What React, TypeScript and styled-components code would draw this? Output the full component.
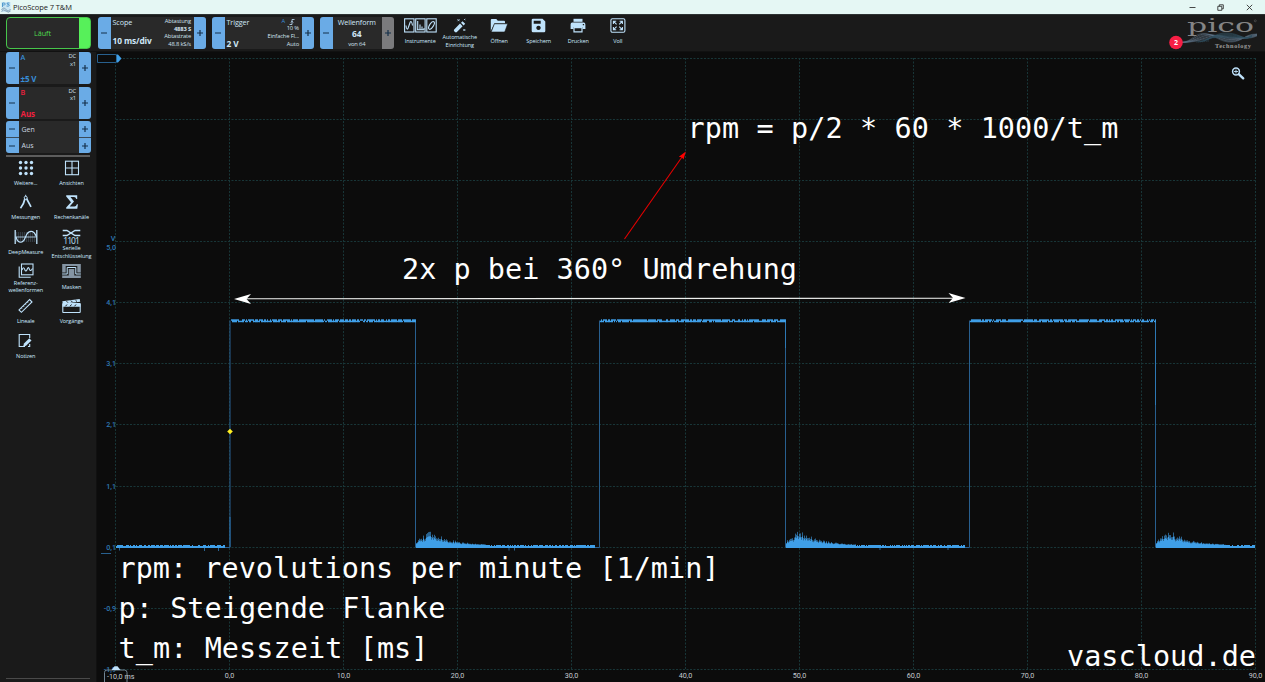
import React from 'react';
import styled, { createGlobalStyle } from 'styled-components';

const ICE = '#bfe2fb';
const WAVE = '#3f9fe8';

const GlobalStyle = createGlobalStyle`
  * { box-sizing: border-box; }
  body {
    margin: 0;
    background: #0c0c0c;
    font-family: "Open Sans", "Noto Sans", sans-serif;
    overflow: hidden;
  }
  svg { display: block; }
`;

const Window = styled.div`
  width: 1265px;
  height: 682px;
  display: flex;
  flex-direction: column;
  background: #0c0c0c;
  overflow: hidden;
`;

const TitleBar = styled.header`
  height: 14px;
  flex: none;
  display: flex;
  align-items: center;
  justify-content: space-between;
  padding: 0 12px 0 1px;
  background: #e5f7f4;
`;

const TitleText = styled.div`
  display: flex;
  align-items: center;
  gap: 2px;
  font-size: 7.5px;
  line-height: 14px;
  color: #222;
  letter-spacing: -0.08px;
`;

const WindowButtons = styled.div`
  display: flex;
  gap: 21px;
`;

const Toolbar = styled.div`
  height: 38px;
  flex: none;
  display: flex;
  background: #1a1a1a;
  border-top: 1px solid #2d3232;
  border-bottom: 1px solid #111;
  padding: 2px 0 0 6px;
`;

const Running = styled.div`
  width: 85px;
  height: 32px;
  margin-right: 7px;
  border: 1px solid #47c64b;
  border-radius: 4px;
  background: linear-gradient(90deg, #292929 72px, #57f05a 72px);
  padding-right: 12px;
  color: #4fdc4f;
  font-size: 7.2px;
  line-height: 31px;
  text-align: center;
`;

const Stepper = styled.div<{ $w: number; $mr?: number }>`
  display: flex;
  width: ${p => p.$w}px;
  height: 32px;
  margin-right: ${p => p.$mr ?? 0}px;
  border-radius: 3px;
  overflow: hidden;
  background: #292929;
`;

const StepButton = styled.div<{ $off?: boolean }>`
  width: 12.5px;
  flex: none;
  display: flex;
  align-items: center;
  justify-content: center;
  background: ${p => (p.$off ? '#7b7b7d' : '#6aabe6')};
`;

const StepBody = styled.div<{ $center?: boolean }>`
  flex: 1;
  min-width: 0;
  display: flex;
  justify-content: ${p => (p.$center ? 'center' : 'space-between')};
  padding: 1px 2.5px 1px 2px;
  white-space: nowrap;
`;

const Main = styled.div<{ $tone?: string; $center?: boolean }>`
  display: flex;
  flex-direction: column;
  justify-content: space-between;
  align-items: ${p => (p.$center ? 'center' : 'flex-start')};
  color: ${p => p.$tone ?? '#cfe6f7'};
`;

const Caption = styled.span<{ $bold?: boolean }>`
  font-size: 7.2px;
  line-height: 9.6px;
  letter-spacing: -0.1px;
  font-weight: ${p => (p.$bold ? 600 : 400)};
`;

const Value = styled.span<{ $size?: number; $lh?: number }>`
  font-size: ${p => p.$size ?? 8.4}px;
  line-height: ${p => p.$lh ?? 12}px;
  letter-spacing: -0.12px;
  font-weight: 700;
`;

const Details = styled.div<{ $lh?: number }>`
  text-align: right;
  color: #d2e2ef;
  font-size: 5.8px;
  font-weight: 500;
  line-height: ${p => p.$lh ?? 7.5}px;
  letter-spacing: -0.15px;
`;

const TriggerMark = styled.div`
  display: flex;
  justify-content: flex-end;
  align-items: center;
  gap: 4px;
  height: 7px;
  margin-right: 4px;
  color: #3a8fdc;
`;

const Tools = styled.div`
  display: flex;
  margin-left: 6.5px;
`;

const Tool = styled.div`
  width: 39.5px;
  display: flex;
  flex-direction: column;
  align-items: center;
`;

const IconBox = styled.div`
  height: 16px;
  display: flex;
  align-items: center;
  justify-content: center;
`;

const Label = styled.div<{ $top?: boolean }>`
  height: 16px;
  margin-top: ${p => (p.$top ? 0.5 : 0)}px;
  display: flex;
  align-items: center;
  justify-content: center;
  text-align: center;
  white-space: pre;
  color: #cdeaff;
  font-size: 5.5px;
  font-weight: 500;
  line-height: 7.6px;
  letter-spacing: -0.08px;
`;

const Brand = styled.div`
  margin-left: auto;
  width: 110px;
  margin-top: -3px;
`;

const Body = styled.div`
  flex: 1;
  display: flex;
  min-height: 0;
`;

const Sidebar = styled.aside`
  width: 97px;
  flex: none;
  background: #1a1a1a;
  border-right: 1px solid #111;
  padding: 0 6px 3px;
  display: flex;
  flex-direction: column;
  gap: 2.5px;
`;

const Generator = styled.div`
  display: flex;
  flex-direction: column;
  width: 85px;
  height: 32px;
  border-radius: 3px;
  overflow: hidden;
  background: #292929;
`;

const GeneratorRow = styled.div`
  display: flex;
  height: 16px;
  &:last-child > * { border-top: 1px solid #3a4a58; }
`;

const GeneratorText = styled.div`
  flex: 1;
  padding-left: 3px;
  color: #cbd7e0;
  font-size: 7px;
  line-height: 17px;
  border: 0 !important;
`;

const Divider = styled.div<{ $bottom?: boolean }>`
  height: ${p => (p.$bottom ? 1 : 1.5)}px;
  background: ${p => (p.$bottom ? '#4a4a4a' : '#5d5d5d')};
  margin-top: ${p => (p.$bottom ? 'auto' : '-0.5px')};
`;

const SideGrid = styled.div`
  display: grid;
  grid-template-columns: 39.5px 52px;
  grid-auto-rows: 34.6px;
  margin-right: -7px;
  padding-top: 0.6px;
`;

const SideTool = styled.div`
  display: flex;
  flex-direction: column;
  align-items: center;
`;

const Plot = styled.div`
  flex: 1;
  min-width: 0;
  background: #0c0c0c;
`;

const Minus = () => (
  <svg width="8" height="8" viewBox="0 0 8 8"><path d="M1 4h6" stroke="#15304a" strokeWidth="1" /></svg>
);
const Plus = () => (
  <svg width="8" height="8" viewBox="0 0 8 8"><path d="M1 4h6M4 1v6" stroke="#15304a" strokeWidth="1.2" /></svg>
);

const stroke = { fill: 'none', stroke: ICE, strokeWidth: 1.1 };

const icons: Record<string, React.ReactNode> = {
  instruments: (
    <svg width="33" height="15" viewBox="0 0 33 15">
      <g {...stroke}>
        <rect x=".6" y=".8" width="9.4" height="13.2" />
        <rect x="11.7" y=".8" width="9.4" height="13.2" />
        <rect x="22.8" y=".8" width="9.4" height="13.2" />
        <path d="M2 7.500c.3 4.500 1.800 4.500 2.500 1.500L6 4.800c.6-2 1.800-2 2.500 2.700" />
        <path d="M13.700 3v8.600M16 6.500v5M18 8.500v3M20 10v1.500M13 11.800h7.500" />
        <ellipse cx="27.500" cy="7.400" rx="1.900" ry="4.400" transform="rotate(32 27.500 7.400)" />
      </g>
    </svg>
  ),
  wand: (
    <svg width="14" height="15" viewBox="0 0 14 15">
      <path d="M1.200 11.500 7 5.600l2.600 2.700-5.700 5.800q-1 .7-1.900-.1l-.8-.8q-.7-.8 0-1.700zM8 4.700l1.500-1.500 2.700 2.600-1.600 1.600z" fill={ICE} />
      <path d="M4.500 1.200l2 2M6.500 1.200l-2 2M11.300 1.200l1 1M12.300 .8l-1 1M10.300 11l2 2M12.300 11l-2 2" stroke={ICE} strokeWidth=".8" />
    </svg>
  ),
  open: (
    <svg width="18" height="15" viewBox="0 0 18 15">
      <path d="M.8 13V2q0-1 1-1h4.500l1.500 1.800H14q1 0 1 1v1.500H4.500z" fill={ICE} />
      <path d="M4.400 5.800h13.300l-2.700 7.500q-.2.700-1 .700H1.200z" fill={ICE} stroke="#1a1a1a" strokeWidth=".6" />
    </svg>
  ),
  save: (
    <svg width="15" height="15" viewBox="0 0 15 15">
      <path fillRule="evenodd" d="M2 .8h9.500L14.300 3.600V13q0 1.200-1.200 1.200H2Q.7 14.200.7 13V2Q.7.8 2 .8zM2.700 2.800v3h7v-3zM7.500 7.700a2.200 2.200 0 1 0 .01 0z" fill={ICE} />
    </svg>
  ),
  print: (
    <svg width="16" height="15" viewBox="0 0 16 15">
      <path d="M3.500.8h9v3h-9z" fill={ICE} />
      <path fillRule="evenodd" d="M2.200 4.600h11.600q1.600 0 1.600 1.800v4.700h-2.900V9h-9v2.100H.6V6.400q0-1.800 1.600-1.800zM12.800 6v1.300h1.300V6z" fill={ICE} />
      <path d="M4 9.700h8v4.100H4z" fill="none" stroke={ICE} strokeWidth="1.200" />
    </svg>
  ),
  full: (
    <svg width="16" height="15" viewBox="0 0 16 15">
      <rect x=".9" y=".7" width="14" height="13.600" rx="1.500" {...stroke} />
      <path d="M3.400 6V3.200h2.800M3.600 3.400l3 3M9.600 3.200h2.800V6M12.200 3.400l-3 3M3.400 9v2.800h2.800M3.600 11.600l3-3M12.400 9v2.800H9.600M12.200 11.600l-3-3" {...stroke} />
    </svg>
  ),
  more: (
    <svg width="16" height="16" viewBox="0 0 16 16">
      {[2.500, 8, 13.500].map(y => [2.500, 8, 13.500].map(x => <circle key={`${x}-${y}`} cx={x} cy={y} r="1.700" fill={ICE} />))}
    </svg>
  ),
  views: (
    <svg width="16" height="16" viewBox="0 0 16 16">
      <rect x="1.500" y="1.200" width="13" height="13.500" {...stroke} />
      <path d="M8 1v14M1.500 8h13" {...stroke} />
    </svg>
  ),
  measure: (
    <svg width="14" height="16" viewBox="0 0 14 16">
      <path d="M6 4.500Q5 10 1.500 14.200M7.500 4.500 12 12.800" fill="none" stroke={ICE} strokeWidth="1.700" />
      <path d="M6.700 .8v2" stroke={ICE} />
      <circle cx="6.700" cy="3.800" r="1.500" fill="#1a1a1a" stroke={ICE} />
    </svg>
  ),
  sigma: (
    <svg width="14" height="16" viewBox="0 0 14 16">
      <path d="M1.200 1.300h11V5h-.9q-.5-2-2.300-2H5.500L9 7.600 4.700 12.500h4.700q1.900 0 2.500-2.300h1l-.6 4.500H1.200v-1.200L6 8.200 1.200 2.400z" fill={ICE} />
    </svg>
  ),
  deep: (
    <svg width="24" height="16" viewBox="0 0 24 16">
      <path d="M2 4h20M2 6h20M2 8h20M2 10h20M2 12h20" stroke="#536474" strokeWidth=".9" strokeDasharray="1.200 .8" />
      <path d="M1.200 1v14M22.800 1v14" stroke={ICE} strokeWidth="1.300" />
      <path d="M1.500 8h21" stroke={ICE} strokeWidth=".8" />
      <path d="M2 8C4 15 9 15 11.500 8S19.500 0 22.500 8" {...stroke} />
    </svg>
  ),
  serial: (
    <svg width="19" height="16" viewBox="0 0 19 16">
      <path d="M.7 1.500h4.200L13 6.500h5.300M.7 6.500h4.200L13 1.500h5.300" fill="none" stroke={ICE} strokeWidth="1.400" />
      <text x="9.500" y="15.300" textAnchor="middle" fontSize="8.500" textLength="16.500" fill={ICE}>1101</text>
    </svg>
  ),
  reference: (
    <svg width="16" height="16" viewBox="0 0 16 16">
      <rect x="3.500" y="1" width="11.500" height="10.800" {...stroke} />
      <path d="M1.200 3.500v10.800h11.500" {...stroke} />
      <path d="M4 7q1.500-4.500 3 0 1 2.500 2.300-1 1.200-3 2.200.5 1 2.500 3-1" {...stroke} />
    </svg>
  ),
  masks: (
    <svg width="19" height="16" viewBox="0 0 19 16">
      <rect x=".2" y="1" width="18.600" height="14" fill="#8494a3" />
      <path d="M.2 11h5V4.500h8.600V11h5" fill="none" stroke="#1a1a1a" strokeWidth="3" />
      <path d="M.2 11h5V4.500h8.600V11h5" fill="none" stroke={ICE} strokeWidth="1" />
    </svg>
  ),
  ruler: (
    <svg width="15" height="16" viewBox="0 0 15 16">
      <path d="M11.600 1.500 14 4 3.400 14.300 1 11.900z" {...stroke} />
      <path d="M3.300 10l1 1M5.300 8l1 1M7.300 6l1 1M9.300 4l1 1" stroke={ICE} strokeWidth=".7" />
    </svg>
  ),
  clapper: (
    <svg width="19" height="16" viewBox="0 0 19 16">
      <rect x=".8" y="5.500" width="17.400" height="9" rx=".6" {...stroke} />
      <path d="M.5 5.500h18v3.200H.5zM.3 3.200 17.700.9l.5 2.800L.8 5.700z" fill={ICE} />
      <path d="M3.500 8.300l1.500-1.800M8 8.300l1.500-1.800M12.500 8.300l1.500-1.800M4.500 3.200l1.500 1.500M9 2.700l1.500 1.500M13.500 2.200l1.500 1.400" stroke="#1a1a1a" strokeWidth="1" />
    </svg>
  ),
  notes: (
    <svg width="15" height="16" viewBox="0 0 15 16">
      <path d="M11.700 5V1.500H1.200v12H7M11.700 11v2.500H10" {...stroke} />
      <path d="M5 13.800l1-3.300 5.300-5.200 2.200 2.200L8 12.800z" fill={ICE} />
    </svg>
  ),
};

const topTools: [string, string][] = [
  ['instruments', 'Instrumente'],
  ['wand', 'Automatische\nEinrichtung'],
  ['open', 'Öffnen'],
  ['save', 'Speichern'],
  ['print', 'Drucken'],
  ['full', 'Voll'],
];

const sideTools: [string, string][] = [
  ['more', 'Weitere...'],
  ['views', 'Ansichten'],
  ['measure', 'Messungen'],
  ['sigma', 'Rechenkanäle'],
  ['deep', 'DeepMeasure'],
  ['serial', 'Serielle\nEntschlüsselung'],
  ['reference', 'Referenz-\nwellenformen'],
  ['masks', 'Masken'],
  ['ruler', 'Lineale'],
  ['clapper', 'Vorgänge'],
  ['notes', 'Notizen'],
];

const Channel = ({ name, value, tone }: { name: string; value: string; tone: string }) => (
  <Stepper $w={85}>
    <StepButton><Minus /></StepButton>
    <StepBody>
      <Main $tone={tone}>
        <Caption $bold>{name}</Caption>
        <Value $size={8} $lh={9}>{value}</Value>
      </Main>
      <Details>DC<br />x1</Details>
    </StepBody>
    <StepButton><Plus /></StepButton>
  </Stepper>
);

const Logo = () => {
  const waves = Array.from({ length: 7 }, (_, i) => i);
  return (
    <svg width="110" height="37" viewBox="1155 14 110 37">
      <g fill="none" strokeWidth=".55">
        {waves.map(i => (
          <path key={i} stroke={i % 2 ? '#71889d' : '#4a5e70'}
            d={`M1181 42.500C${1192 + i} 42 ${1194 + i * 2} ${33 + i} ${1204 + i * 1.500} ${33.500 + i * .5}S${1220 + i} ${43 - i} ${1232} ${42 - i * .8}S${1244 + i} ${34 + i} 1257 ${34 + i * .3}`} />
        ))}
        {waves.map(i => (
          <path key={i} stroke="#304f60"
            d={`M${1196 + i * 2} 42C1208 ${42 - i} 1214 ${32 + i} 1228 ${33 + i * .8}S1245 ${42 - i * .5} 1252 ${35 + i * .3}`} />
        ))}
      </g>
      <text x="1187" y="31.500" fontFamily="DejaVu Serif, serif" fontSize="19" textLength="67" lengthAdjust="spacingAndGlyphs" fill="#858585">pico</text>
      <circle cx="1255.300" cy="20.800" r="1" fill="none" stroke="#777" strokeWidth=".4" />
      <text x="1215" y="48" fontFamily="Liberation Serif, serif" fontWeight="700" fontSize="6.300" textLength="36" fill="#9a9a9a">Technology</text>
      <circle cx="1176" cy="42.500" r="6.800" fill="#f81f45" />
      <text x="1176" y="45" textAnchor="middle" fontSize="7" fontWeight="700" fill="#fff">2</text>
    </svg>
  );
};

const gridX = Array.from({ length: 11 }, (_, i) => Math.round(115 + i * 114) + 0.5);
const gridY = Array.from({ length: 11 }, (_, i) => Math.floor(58.200 + i * 61.130) + 0.5);
const xLabels = ['', '0,0', '10,0', '20,0', '30,0', '40,0', '50,0', '60,0', '70,0', '80,0', '90,0'];
const yLabels = ['5,0', '4,1', '3,1', '2,1', '1,1', '0,1', '-0,9'];

const pulses = [
  { rise: 230, fall: 416 },
  { rise: 599.500, fall: 785.500 },
  { rise: 969.500, fall: 1155.500 },
];

const noise = (seed: number) => {
  let s = seed;
  return () => {
    s = (s * 16807) % 2147483647;
    return s / 2147483647;
  };
};

const topNoise = (from: number, to: number) => {
  const rnd = noise(Math.round(from));
  let d = '';
  for (let x = Math.floor(from) + 1; x < to; x += 1) {
    const h = rnd() > 0.35 ? 3 : 1.500;
    const y = 319.300 + (h < 2 && rnd() > 0.4 ? 1.400 : 0);
    d += `M${x + 0.5} ${y}v${h}`;
  }
  return d;
};

const lowNoise = (from: number, to: number) => {
  const rnd = noise(Math.round(from) + 5);
  let d = '';
  for (let x = Math.round(from); x < to; x += 1) {
    d += `M${x + 0.5} 548v${-(rnd() > 0.3 ? 3 : 2)}`;
  }
  return d;
};

const ringing = (from: number, scale: number) => {
  const rnd = noise(Math.round(from) + 11);
  let d = '';
  for (let i = 0; i < 70; i += 1) {
    if (from + i > 1255) break;
    const env = i < 14 ? 5 + i * 0.8 : 15 * Math.exp(-(i - 14) / 22);
    const h = 2.500 + env * (0.5 + 0.5 * rnd()) * scale;
    d += `M${Math.round(from) + i + 0.5} 548v${-h.toFixed(1)}`;
  }
  return d;
};

const Chart = () => (
  <svg width="1168" height="630" viewBox="97 52 1168 630">
    <g stroke="#183638" strokeWidth="1" strokeDasharray="2 1.500">
      {gridX.map(x => <path key={x} d={`M${x} 58V670`} />)}
      {gridY.map(y => <path key={y} d={`M116 ${y}H1256`} />)}
    </g>
    <path d="M97.500 54.500h17.500q2 0 2 1.500v5q0 1.500-2 1.500H97.500z" fill="#0c0c0c" stroke="#28608e" />
    <path d="M116.500 54.500h1.500l3.500 4-3.500 4h-1.500z" fill={WAVE} />

    <g fill="#2f78b4" fontFamily="Roboto, sans-serif" fontWeight="500" fontSize="7.200" textAnchor="end">
      <text x="115.500" y="241">V</text>
      {yLabels.map((t, i) => <text key={t} x="116" y={i === 0 ? 249.500 : gridY[3 + i] + 2.500}>{t}</text>)}
      <text x="116" y="671.500">-1,9</text>
    </g>
    <path d="M101 553.500h10" stroke="#28608e" />

    <g fill="#c6cbd0" fontFamily="Roboto, sans-serif" fontSize="7.200" textAnchor="middle">
      {xLabels.map((t, i) => <text key={i} x={gridX[i]} y="678.300">{t}</text>)}
    </g>
    <rect x="104.500" y="670" width="22.500" height="16" rx="2.500" fill="none" stroke="#718594" />
    <text x="107" y="678.500" fontFamily="Roboto, sans-serif" fontSize="7.200" fill="#c6cbd0" textLength="27.500">-10,0 ms</text>
    <path d="M111.500 670l3-3.800h3l3 3.800z" fill={ICE} />

    <g fill="none" stroke="#285f8f" strokeWidth="1">
      {pulses.map(p => (
        <path key={p.rise} d={`M${p.rise - 5} 547.500H${p.rise}V320.500M${Math.floor(p.fall) + (p.fall === 416 ? -0.5 : 0.5)} 320V547.500`} />
      ))}
    </g>
    <path d="M785.500 320V348M1155.500 320V405M230 517V547" stroke="#2f7fbe" strokeWidth=".8" />
    <g fill="none" stroke={WAVE} strokeWidth="1">
      <path d={lowNoise(116, 225)} />
      {pulses.map((p, i) => (
        <React.Fragment key={p.rise}>
          <path d={topNoise(p.rise, p.fall)} />
          <path d={lowNoise(p.fall, i < 2 ? pulses[i + 1].rise - 5 : 1255)} />
          <path d={ringing(p.fall, 1)} opacity=".6" />
          <path d={ringing(p.fall, 0.68)} />
        </React.Fragment>
      ))}
      <path d="M119.500 548v2.500M204.500 548v3M218.500 548v3M509 548v2.500M514.500 548v2.500M880 548v2M948 548v2" opacity=".6" />
    </g>
    <path d="M230 428.700l2.800 2.800-2.800 2.800-2.800-2.800z" fill="#ffef22" />

    <path d="M245 298.800 955 298.200" stroke="#eef0ee" strokeWidth="1.100" />
    <path d="M234 299l17-5-4.500 5 4.500 5zM965.500 298l-17-5 4.500 5-4.500 5z" fill="#fff" />
    <path d="M624.500 239 682 157" stroke="#e60000" strokeWidth="1.100" />
    <path d="M685.800 151.500l-2.300 8-1.700-2.200-3-.6z" fill="#f00" />

    <g fill="#fff" fontFamily="DejaVu Sans Mono, monospace" fontSize="28.500">
      <text x="687.500" y="138" textLength="431">rpm = p/2 * 60 * 1000/t_m</text>
      <text x="402" y="278.500" textLength="395">2x p bei 360° Umdrehung</text>
      <text x="118.500" y="577.500" textLength="601">rpm: revolutions per minute [1/min]</text>
      <text x="118.500" y="617.500" textLength="327">p: Steigende Flanke</text>
      <text x="118.500" y="658" textLength="310">t_m: Messzeit [ms]</text>
      <text x="1067" y="665.500" textLength="189">vascloud.de</text>
    </g>

    <circle cx="1236" cy="71.500" r="3.400" fill="#0c0c0c" stroke={ICE} strokeWidth="1.500" />
    <path d="M1234 71.500h4M1236 69.500v4" stroke={ICE} strokeWidth=".9" />
    <path d="M1239 74.300l4.200 4" stroke={ICE} strokeWidth="2.400" strokeLinecap="round" />
  </svg>
);

export default function App() {
  return (
    <Window>
      <GlobalStyle />
      <TitleBar>
        <TitleText>
          <svg width="10" height="12" viewBox="0 0 10 12">
            <rect x=".5" y="1" width="9" height="10" fill="#c8e5f3" />
            <path d="M1.500 6V2h2q1.500 1.200 0 2H1.500M8.500 2q-3-.6-2.500 1 2.800.3 2.300 1.600-.8 1-2.800.4" fill="none" stroke="#4693ca" strokeWidth=".9" />
            <path d="M.5 9q2-3.500 4.500-.5t4.500-.5M.5 10.500q2-3 4.500-.5t4.500 0" fill="none" stroke="#69859c" strokeWidth=".7" />
          </svg>
          PicoScope 7 T&amp;M
        </TitleText>
        <WindowButtons>
          {['M.5 3.500h6', 'M.8 2.300h4v4h-4zM2.300 2.300V.8h4v4H5', 'M.8.800l5.400 5.400M6.200.800.800 6.200'].map(d => (
            <svg key={d} width="7.500" height="7" viewBox="0 0 7.500 7"><path d={d} fill="none" stroke="#333" strokeWidth=".9" /></svg>
          ))}
        </WindowButtons>
      </TitleBar>

      <Toolbar>
        <Running>Läuft</Running>
        <Stepper $w={108} $mr={6}>
          <StepButton><Minus /></StepButton>
          <StepBody>
            <Main>
              <Caption>Scope</Caption>
              <Value $lh={14}>10 ms/div</Value>
            </Main>
            <Details>Abtastung<br /><b>4883 S</b><br />Abtastrate<br />48.8 kS/s</Details>
          </StepBody>
          <StepButton><Plus /></StepButton>
        </Stepper>
        <Stepper $w={102} $mr={6}>
          <StepButton><Minus /></StepButton>
          <StepBody>
            <Main>
              <Caption>Trigger</Caption>
              <Value $lh={9}>2 V</Value>
            </Main>
            <Details $lh={7.8}>
              <TriggerMark>
                A
                <svg width="6" height="6" viewBox="0 0 6 6"><path d="M.5 5.500H3V.5h2.500M1.800 3.500 3 2.200l1.200 1.300" fill="none" stroke={ICE} strokeWidth=".8" /></svg>
              </TriggerMark>
              10 %<br />Einfache Fl...<br />Auto
            </Details>
          </StepBody>
          <StepButton><Plus /></StepButton>
        </Stepper>
        <Stepper $w={74} $mr={0}>
          <StepButton><Minus /></StepButton>
          <StepBody $center>
            <Main $center>
              <Caption>Wellenform</Caption>
              <Value>64</Value>
              <Details>von 64</Details>
            </Main>
          </StepBody>
          <StepButton $off><Plus /></StepButton>
        </Stepper>
        <Tools>
          {topTools.map(([icon, label]) => (
            <Tool key={icon}>
              <IconBox>{icons[icon]}</IconBox>
              <Label $top>{label}</Label>
            </Tool>
          ))}
        </Tools>
        <Brand><Logo /></Brand>
      </Toolbar>

      <Body>
        <Sidebar>
          <Channel name="A" value="±5 V" tone="#388dd8" />
          <Channel name="B" value="Aus" tone="#f0203f" />
          <Generator>
            {['Gen', 'Aus'].map(t => (
              <GeneratorRow key={t}>
                <StepButton><Minus /></StepButton>
                <GeneratorText>{t}</GeneratorText>
                <StepButton><Plus /></StepButton>
              </GeneratorRow>
            ))}
          </Generator>
          <Divider />
          <SideGrid>
            {sideTools.map(([icon, label]) => (
              <SideTool key={icon}>
                <IconBox>{icons[icon]}</IconBox>
                <Label>{label}</Label>
              </SideTool>
            ))}
          </SideGrid>
          <Divider $bottom />
        </Sidebar>
        <Plot><Chart /></Plot>
      </Body>
    </Window>
  );
}
